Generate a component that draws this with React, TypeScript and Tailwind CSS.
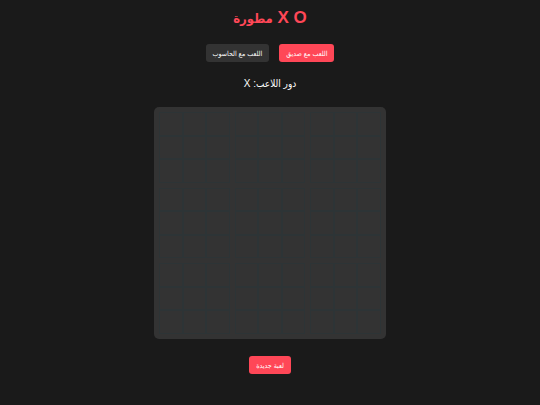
import { useState } from "react";

const modes = ["اللعب مع صديق", "اللعب مع الحاسوب"];
const nine = Array.from({ length: 9 }, (_, i) => i);

export default function App() {
  const [mode, setMode] = useState(0);
  const [cells, setCells] = useState<string[]>(Array(81).fill(""));
  const turn = cells.filter(Boolean).length % 2 === 0 ? "X" : "O";

  const play = (i: number) => {
    if (!cells[i]) setCells(cells.map((c, n) => (n === i ? turn : c)));
  };

  return (
    <main
      dir="rtl"
      className="flex min-h-screen flex-col items-center bg-[#1a1a1a] px-4 pt-1 pb-7 font-['Liberation_Sans','DejaVu_Sans_Condensed','DejaVu_Sans',sans-serif] text-white"
    >
      <h1 className="text-[17px] leading-7 font-bold text-[#ff4757]">
        X O <span className="text-[13px] leading-none">مطورة</span>
      </h1>
      <div className="mt-3 flex gap-[10px]">
        {modes.map((label, i) => (
          <button
            key={label}
            type="button"
            onClick={() => setMode(i)}
            className={`h-[18px] rounded-[3px] px-[7px] text-[7px] leading-none ${mode === i ? "bg-[#ff4757]" : "bg-[#333333]"}`}
          >
            {label}
          </button>
        ))}
      </div>
      <p className="mt-3 text-[10px] leading-5">دور اللاعب: {turn}</p>
      <div className="mt-[13px] grid aspect-square w-full max-w-[232px] grid-cols-3 grid-rows-3 gap-[5px] rounded-[5px] bg-[#333333] p-[5px]">
        {nine.map((b) => (
          <div key={b} className="grid grid-cols-3 grid-rows-3">
            {nine.map((c) => (
              <button
                key={c}
                type="button"
                aria-label={`لوحة ${b + 1} خانة ${c + 1}`}
                onClick={() => play(b * 9 + c)}
                className="border border-[#2d3436] text-xs leading-none font-bold"
              >
                {cells[b * 9 + c]}
              </button>
            ))}
          </div>
        ))}
      </div>
      <button
        type="button"
        onClick={() => setCells(Array(81).fill(""))}
        className="mt-[17px] h-[18px] rounded-[3px] bg-[#ff4757] px-[7px] text-[7px] leading-none"
      >
        لعبة جديدة
      </button>
    </main>
  );
}
